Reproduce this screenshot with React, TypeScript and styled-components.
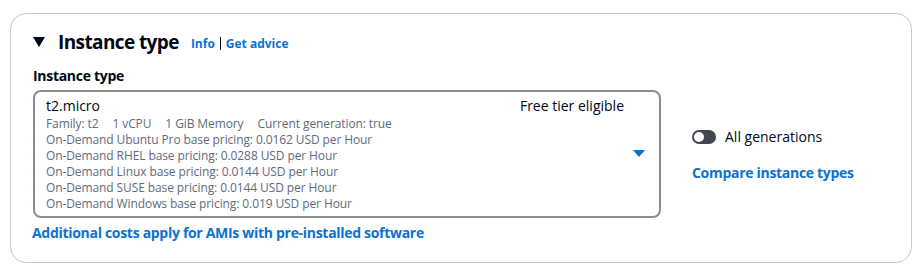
import React, { useState } from "react";
import styled, { createGlobalStyle } from "styled-components";

const GlobalStyle = createGlobalStyle`
  body {
    margin: 0;
    background: #ffffff;
    font-family: "Open Sans", "Noto Sans", sans-serif;
    color: #000716;
  }
`;

const Page = styled.div`
  padding: 13px 11px 9px 10px;
`;

const Card = styled.section`
  border: 1px solid #c6c6cd;
  border-radius: 16px;
  padding: 14px 20px 20px 22px;
  height: 250px;
  box-sizing: border-box;
`;

const HeaderRow = styled.div`
  display: flex;
  align-items: center;
  height: 28px;
`;

const Caret = styled.svg`
  width: 12px;
  height: 12px;
  margin-right: 13px;
`;

const Title = styled.h2`
  margin: 0;
  font-size: 19px;
  font-weight: 700;
  letter-spacing: -0.6px;
`;

const HeaderLinks = styled.div`
  display: flex;
  align-items: center;
  margin-left: 12px;
  margin-top: 3px;
  font-size: 12px;
  font-weight: 700;
  color: #0972d3;
`;

const Divider = styled.span`
  width: 1px;
  height: 13px;
  background: #000716;
  margin: 0 5px;
`;

const FieldLabel = styled.div`
  font-size: 14px;
  font-weight: 700;
  letter-spacing: -0.3px;
  margin-top: 11px;
  line-height: 18px;
`;

const FieldRow = styled.div`
  display: flex;
  align-items: flex-start;
  margin-top: 5px;
`;

const SelectBox = styled.div`
  width: 628px;
  box-sizing: border-box;
  border: 2px solid #8c8c94;
  border-radius: 8px;
  padding: 4px 14px 4px 11px;
  display: flex;
  align-items: center;
`;

const SelectBody = styled.div`
  flex: 1;
`;

const TopLine = styled.div`
  display: flex;
  justify-content: space-between;
  font-size: 14px;
  line-height: 20px;
  padding-right: 9px;
`;

const Detail = styled.div`
  font-size: 12px;
  line-height: 16px;
  color: #5f6b7a;
  letter-spacing: -0.1px;
`;

const Spec = styled.span`
  margin-right: 14px;
`;

const Side = styled.div`
  display: flex;
  flex-direction: column;
  margin-left: 31px;
  margin-top: 37px;
  gap: 17px;
`;

const ToggleRow = styled.label`
  display: flex;
  align-items: center;
  font-size: 14px;
  gap: 9px;
`;

const Track = styled.span<{ on: boolean }>`
  width: 24px;
  height: 14px;
  border-radius: 7px;
  background: ${(p) => (p.on ? "#0972d3" : "#424650")};
  position: relative;
  display: inline-block;
  &::after {
    content: "";
    position: absolute;
    top: 2px;
    left: ${(p) => (p.on ? "12px" : "2px")};
    width: 10px;
    height: 10px;
    border-radius: 50%;
    background: #fff;
  }
`;

const Link = styled.a`
  color: #0972d3;
  font-weight: 700;
  font-size: 14px;
  letter-spacing: -0.3px;
  text-decoration: none;
`;

const Footer = styled.div`
  margin-top: 3px;
  margin-left: -1px;
`;

const pricing = [
  "On-Demand Ubuntu Pro base pricing: 0.0162 USD per Hour",
  "On-Demand RHEL base pricing: 0.0288 USD per Hour",
  "On-Demand Linux base pricing: 0.0144 USD per Hour",
  "On-Demand SUSE base pricing: 0.0144 USD per Hour",
  "On-Demand Windows base pricing: 0.019 USD per Hour",
];

const App = () => {
  const [allGen, setAllGen] = useState(false);
  return (
    <Page>
      <GlobalStyle />
      <Card>
        <HeaderRow>
          <Caret viewBox="0 0 12 12">
            <path d="M0 1h12L6 11z" fill="#000716" />
          </Caret>
          <Title>Instance type</Title>
          <HeaderLinks>
            <span>Info</span>
            <Divider />
            <span>Get advice</span>
          </HeaderLinks>
        </HeaderRow>
        <FieldLabel>Instance type</FieldLabel>
        <FieldRow>
          <SelectBox>
            <SelectBody>
              <TopLine>
                <span>t2.micro</span>
                <span>Free tier eligible</span>
              </TopLine>
              <Detail>
                <Spec>Family: t2</Spec>
                <Spec>1 vCPU</Spec>
                <Spec>1 GiB Memory</Spec>
                <span>Current generation: true</span>
              </Detail>
              {pricing.map((p) => (
                <Detail key={p}>{p}</Detail>
              ))}
            </SelectBody>
            <svg width="12" height="8" viewBox="0 0 12 8">
              <path d="M0 0h12L6 7z" fill="#0972d3" />
            </svg>
          </SelectBox>
          <Side>
            <ToggleRow onClick={() => setAllGen(!allGen)}>
              <Track on={allGen} />
              All generations
            </ToggleRow>
            <Link>Compare instance types</Link>
          </Side>
        </FieldRow>
        <Footer>
          <Link>Additional costs apply for AMIs with pre-installed software</Link>
        </Footer>
      </Card>
    </Page>
  );
};

export default App;
